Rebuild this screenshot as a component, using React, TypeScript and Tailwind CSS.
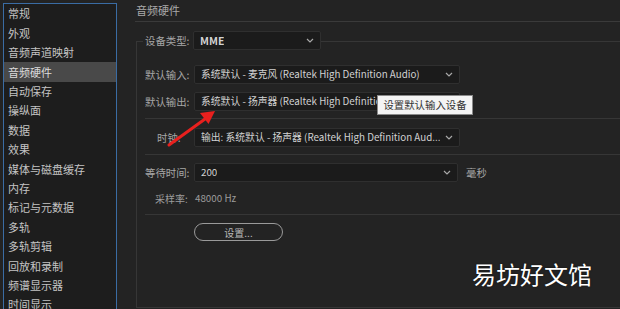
import React from "react";

const F = { fontFamily: '"Noto Sans CJK SC", "Noto Sans", sans-serif' };

const sideItems = [
  "常规",
  "外观",
  "音频声道映射",
  "音频硬件",
  "自动保存",
  "操纵面",
  "数据",
  "效果",
  "媒体与磁盘缓存",
  "内存",
  "标记与元数据",
  "多轨",
  "多轨剪辑",
  "回放和录制",
  "频谱显示器",
  "时间显示",
];

function Chevron() {
  return (
    <svg width="8" height="5" viewBox="0 0 8 5" className="shrink-0">
      <path d="M1 1 L4 4 L7 1" fill="none" stroke="#a8a8a8" strokeWidth="1.2" />
    </svg>
  );
}

function Select({ text, w, bold }: { text: string; w: string; bold?: boolean }) {
  return (
    <div
      className={`flex h-[19px] ${w} items-center justify-between rounded-[2px] border border-[#2f2f2f] bg-[#1b1b1b] pl-[6px] pr-[6px]`}
    >
      <span
        className={`truncate whitespace-nowrap text-[#d2d2d2] ${bold ? "text-[10.5px] font-semibold" : "text-[9.8px]"}`}
      >
        {text}
      </span>
      <Chevron />
    </div>
  );
}

function Label({ children, cls = "" }: { children: React.ReactNode; cls?: string }) {
  return (
    <span className={`w-[49px] shrink-0 whitespace-nowrap text-[10.4px] text-[#a6a6a6] ${cls}`}>
      {children}
    </span>
  );
}

export default function App() {
  return (
    <div className="relative flex h-[309px] w-[620px] overflow-hidden bg-[#232323]" style={F}>
      <aside className="ml-[3px] mt-[3px] h-[330px] w-[114px] shrink-0 border-l border-r border-t border-[#3a6ca4] bg-[#1d1d1d]">
        {sideItems.map((s) => (
          <div
            key={s}
            className={`flex h-[19.4px] items-center whitespace-nowrap pl-[4px] text-[11px] ${
              s === "音频硬件" ? "bg-[#494949] text-[#dcdcdc]" : "text-[#c4c4c4]"
            }`}
          >
            {s}
          </div>
        ))}
      </aside>

      <main className="ml-[18px] flex flex-1 flex-col">
        <div className="flex h-[22px] shrink-0 items-center border-b border-[#3a3a3a] pb-[1px] pl-[1px] text-[11px] text-[#a9a9a9]">
          音频硬件
        </div>

        <div className="ml-[1px] mt-[19px] flex h-[267px] flex-col border-b border-l border-t border-[#363636] pl-[8px]">
          <div className="-mt-[11px] flex items-center">
            <span className="-ml-[2px] w-[50px] shrink-0 bg-[#232323] pl-[2px] text-[10.4px] text-[#a6a6a6]">
              设备类型:
            </span>
            <Select text="MME" w="w-[128px]" bold />
          </div>

          <div className="mt-[15px] flex items-center">
            <Label>默认输入:</Label>
            <Select text="系统默认 - 麦克风 (Realtek High Definition Audio)" w="w-[266px]" />
          </div>

          <div className="mt-[8px] flex items-center">
            <Label>默认输出:</Label>
            <Select text="系统默认 - 扬声器 (Realtek High Definition Audio)" w="w-[266px]" />
          </div>

          <div className="mt-[7px] border-t border-[#363636]" />

          <div className="mt-[9px] flex items-center">
            <Label cls="pl-[12px]">时钟:</Label>
            <Select text="输出: 系统默认 - 扬声器 (Realtek High Definition Aud..." w="w-[266px]" />
          </div>

          <div className="mt-[7px] border-t border-[#363636]" />

          <div className="mt-[8px] flex items-center">
            <Label>等待时间:</Label>
            <Select text="200" w="w-[264px]" />
            <span className="ml-[8px] text-[10.4px] text-[#a6a6a6]">毫秒</span>
          </div>

          <div className="mt-[9px] flex h-[14px] items-center pl-[10px] text-[9.8px] text-[#9c9c9c]">
            <span className="w-[40px] text-[10px]">采样率:</span>
            <span>48000 Hz</span>
          </div>

          <div className="mt-[9px] border-t border-[#363636]" />

          <div className="ml-[49px] mt-[8px] flex h-[18px] w-[89px] items-center justify-center rounded-full border-[1.5px] border-[#9a9a9a] text-[10px] text-[#b8b8b8]">
            设置...
          </div>
        </div>
      </main>

      <div className="absolute left-[377px] top-[95px] flex h-[20px] w-[96px] items-center justify-center border border-[#8a8a8a] bg-[#f4f4f4] text-[10.4px] text-[#333333]">
        设置默认输入设备
      </div>

      <svg className="pointer-events-none absolute left-0 top-0" width="620" height="309">
        <line x1="169" y1="145" x2="205" y2="119" stroke="#e8201e" strokeWidth="3" strokeLinecap="round" />
        <polygon points="215,111 208.5,124 200,113" fill="#e8201e" />
      </svg>

      <div
        className="absolute left-[472px] top-[259px] text-[24px] leading-[30px] text-white"
        style={{ textShadow: "0 0 2px rgba(0,0,0,0.6)" }}
      >
        易坊好文馆
      </div>
    </div>
  );
}
